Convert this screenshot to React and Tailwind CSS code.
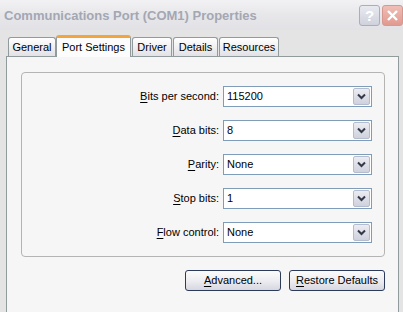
import React from "react";

const rows = [
  { key: "B", post: "its per second:", value: "115200" },
  { key: "D", post: "ata bits:", value: "8" },
  { key: "P", post: "arity:", value: "None" },
  { key: "S", post: "top bits:", value: "1" },
  { key: "F", post: "low control:", value: "None" },
];

const tabs = ["General", "Port Settings", "Driver", "Details", "Resources"];
const tabWidths = ["w-[48px]", "w-[75px]", "w-[40px]", "w-[45px]", "w-[60px]"];

function Chevron() {
  return (
    <svg width="9" height="7" viewBox="0 0 9 7">
      <path d="M1 1.5 L4.5 5 L8 1.5" stroke="#33384a" strokeWidth="2" fill="none" />
    </svg>
  );
}

function Combo({ value }) {
  return (
    <div className="w-[149px] h-[21px] border border-[#7f9db9] bg-white flex items-center">
      <span className="flex-1 pl-[3px] text-[11px] text-black leading-none">{value}</span>
      <div className="w-[17px] h-[17px] mr-[1px] border border-[#b4bccf] rounded-[2px] bg-gradient-to-b from-[#ecedf2] to-[#cfd1dc] flex items-center justify-center">
        <Chevron />
      </div>
    </div>
  );
}

function Button({ k, rest }) {
  return (
    <button className="w-[96px] h-[21px] border border-[#2d3b5a] rounded-[3px] bg-gradient-to-b from-[#fbfbfb] via-[#eeeef2] to-[#d6d7e0] text-[11px] text-black leading-none">
      <span className="underline underline-offset-2">{k}</span>
      {rest}
    </button>
  );
}

export default function App() {
  return (
    <div className="w-[403px] h-[312px] overflow-hidden bg-[#e4e4e4] font-['Tahoma','Liberation_Sans',sans-serif] select-none">
      {/* title bar */}
      <div className="h-[30px] bg-gradient-to-b from-[#f2f2f4] via-[#e7e7ea] to-[#e2e2e6] flex items-center justify-between pl-[4px]">
        <span className="text-[13px] font-bold text-[#a3a7b3] font-['Liberation_Sans',sans-serif] pt-[1px]">
          Communications Port (COM1) Properties
        </span>
        <div className="flex items-center gap-[2px] pt-[1px]">
          <div className="w-[21px] h-[21px] rounded-[3px] border border-[#a9adbd] bg-gradient-to-b from-[#e9eaf0] to-[#cfd1dc] flex items-center justify-center text-[15px] font-bold text-white leading-none">
            ?
          </div>
          <div className="w-[21px] h-[21px] rounded-[3px] border border-[#d49a92] bg-gradient-to-b from-[#f0beb6] to-[#e19a90] flex items-center justify-center">
            <svg width="13" height="13" viewBox="0 0 13 13">
              <path d="M2 2 L11 11 M11 2 L2 11" stroke="white" strokeWidth="2.4" />
            </svg>
          </div>
        </div>
      </div>

      {/* tabs */}
      <div className="flex items-end pl-[8px] h-[26px] relative z-10">
        {tabs.map((t, i) =>
          i === 1 ? (
            <div
              key={t}
              className={`${tabWidths[i]} h-[22px] -mb-px bg-[#fcfcfc] border-x border-[#919b9c] border-t-[3px] border-t-[#f2a53c] rounded-t-[3px] flex items-center justify-center text-[11px] text-black`}
            >
              {t}
            </div>
          ) : (
            <div
              key={t}
              className={`${tabWidths[i]} h-[19px] ${i === 0 ? "" : "ml-px"} bg-gradient-to-b from-[#ffffff] to-[#e2e2e6] border border-b-0 border-[#919b9c] rounded-t-[3px] flex items-center justify-center text-[11px] text-black`}
            >
              {t}
            </div>
          )
        )}
      </div>

      {/* panel */}
      <div className="ml-[6px] mr-[4px] h-[258px] border border-[#919b9c] bg-[#f6f6f6] pt-[15px] pl-[14px] pr-[13px]">
        <div className="h-[185px] border border-[#b4b4b4] rounded-[4px] pt-[13px] pr-[12px] flex flex-col items-end gap-[13px]">
          {rows.map((r) => (
            <div key={r.post} className="flex items-center gap-[4px]">
              <span className="text-[11px] text-black leading-none">
                <span className="underline underline-offset-2">{r.key}</span>
                {r.post}
              </span>
              <Combo value={r.value} />
            </div>
          ))}
        </div>
        <div className="flex justify-end gap-[8px] mt-[13px]">
          <Button k="A" rest="dvanced..." />
          <Button k="R" rest="estore Defaults" />
        </div>
      </div>
    </div>
  );
}
